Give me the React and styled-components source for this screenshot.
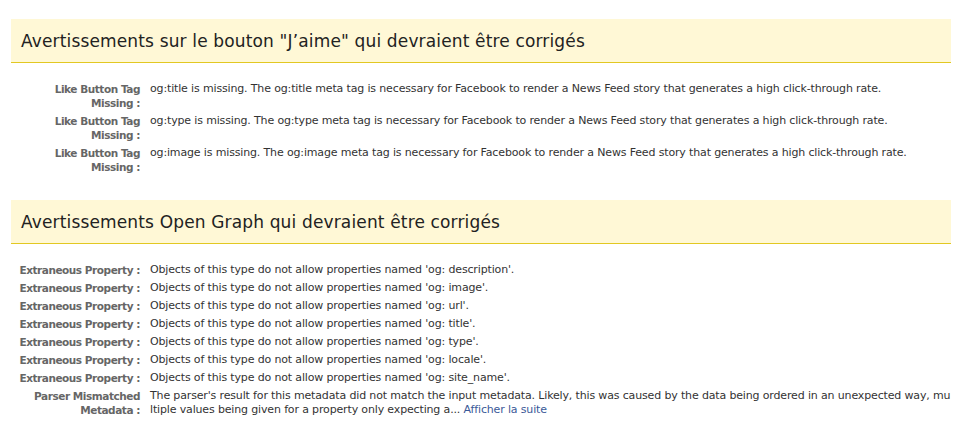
import React from "react";
import styled, { createGlobalStyle } from "styled-components";

const Global = createGlobalStyle`
  html, body { margin: 0; padding: 0; background: #fff; }
  body {
    font-family: "DejaVu Sans", "Liberation Sans", sans-serif;
    font-size: 11px;
    color: #333;
  }
`;

const Page = styled.div`
  width: 940px;
  padding: 19px 0 0 11px;
  display: flex;
  flex-direction: column;
  gap: 24px;
`;

const Section = styled.section`
  display: flex;
  flex-direction: column;
  gap: 17px;
`;

const Header = styled.h2`
  margin: 0;
  height: 44px;
  box-sizing: border-box;
  padding: 0 10px;
  display: flex;
  align-items: center;
  background: #fff8d6;
  border-bottom: 1px solid #e2c822;
  font-family: "DejaVu Sans", sans-serif;
  font-size: 17px;
  font-weight: normal;
  color: #222;
  letter-spacing: 0.15px;
`;

const Table = styled.div`
  display: grid;
  grid-template-columns: ${(p) => p.$label}px 1fr;
  column-gap: 10px;
  padding-left: ${(p) => 129 - p.$label}px;
`;

const Label = styled.div`
  text-align: right;
  font-weight: bold;
  font-size: 10.5px;
  color: #666;
  line-height: 14px;
  padding: 2px 0;
  letter-spacing: -0.45px;
`;

const Value = styled.div`
  line-height: 14px;
  padding: 2px 0;
  color: #333;
  letter-spacing: -0.15px;
  word-break: ${(p) => (p.$breakAll ? "break-all" : "normal")};
`;

const Link = styled.a`
  color: #3b5998;
  text-decoration: none;
`;

const likeRows = ["title", "type", "image"];
const ogProps = ["description", "image", "url", "title", "type", "locale", "site_name"];

export default function App() {
  return (
    <>
      <Global />
      <Page>
        <Section>
          <Header>Avertissements sur le bouton "J’aime" qui devraient être corrigés</Header>
          <Table $label={92}>
            {likeRows.map((t) => (
              <React.Fragment key={t}>
                <Label>Like Button Tag Missing :</Label>
                <Value>
                  og:{t} is missing. The og:{t} meta tag is necessary for Facebook to render a News Feed story that generates a high click-through rate.
                </Value>
              </React.Fragment>
            ))}
          </Table>
        </Section>
        <Section>
          <Header>Avertissements Open Graph qui devraient être corrigés</Header>
          <Table $label={124}>
            {ogProps.map((p) => (
              <React.Fragment key={p}>
                <Label>Extraneous Property :</Label>
                <Value>Objects of this type do not allow properties named 'og: {p}'.</Value>
              </React.Fragment>
            ))}
            <Label>Parser Mismatched Metadata :</Label>
            <Value $breakAll>
              The parser's result for this metadata did not match the input metadata. Likely, this was caused by the data being ordered in an unexpected way, multiple values being given for a property only expecting a...{" "}
              <Link href="#">Afficher la suite</Link>
            </Value>
          </Table>
        </Section>
      </Page>
    </>
  );
}
